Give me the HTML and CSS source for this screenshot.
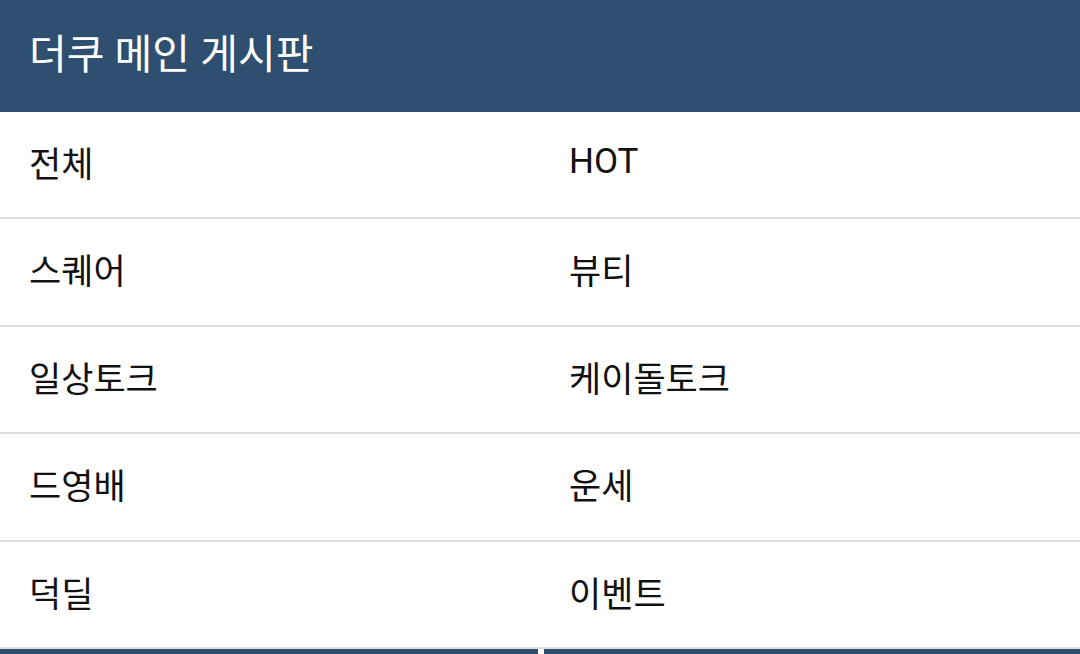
FILE: index.html
```html
<!DOCTYPE html>
<html lang="ko">
<head>
<meta charset="utf-8">
<link rel="stylesheet" href="styles.css">
</head>
<body>
<header class="board-header">더쿠 메인 게시판</header>
<ul class="board-grid">
  <li class="board-item">전체</li>
  <li class="board-item">HOT</li>
  <li class="board-item">스퀘어</li>
  <li class="board-item">뷰티</li>
  <li class="board-item">일상토크</li>
  <li class="board-item">케이돌토크</li>
  <li class="board-item">드영배</li>
  <li class="board-item">운세</li>
  <li class="board-item">덕딜</li>
  <li class="board-item">이벤트</li>
</ul>
<div class="next-bar">
  <div class="next-cell"></div>
  <div class="next-cell"></div>
</div>
</body>
</html>
```

FILE: styles.css
```css
html, body {
  margin: 0;
  padding: 0;
  background: #ffffff;
  overflow: hidden;
}
body {
  font-family: Roboto, "Noto Sans CJK KR", "Noto Sans", sans-serif;
  color: #111111;
}
.board-header {
  height: 111.5px;
  box-sizing: border-box;
  background: #2e4f70;
  color: #ffffff;
  font-size: 41px;
  display: flex;
  align-items: center;
  padding-left: 29px;
  padding-bottom: 10px;
}
.board-grid {
  list-style: none;
  margin: 0;
  padding: 0;
  display: grid;
  grid-template-columns: 540px 540px;
}
.board-item {
  height: 107.5px;
  box-sizing: border-box;
  border-bottom: 2px solid #dddddd;
  display: flex;
  align-items: center;
  padding-left: 29px;
  padding-bottom: 6px;
  font-size: 35px;
}
.next-bar {
  display: flex;
  gap: 6px;
  height: 10px;
}
.next-cell {
  flex: 1;
  background: #2e4f70;
}
.next-cell:first-child {
  flex: 0 0 538px;
}
```
